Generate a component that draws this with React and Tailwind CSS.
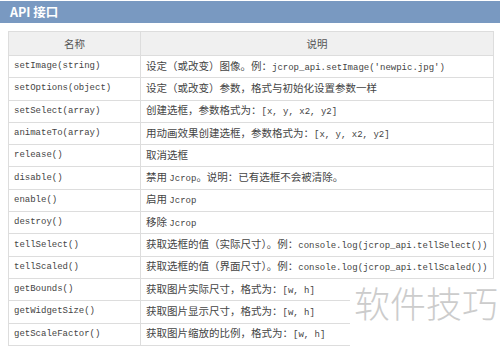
import React from 'react';

const rows = [
  ['setImage(string)', [['设定（或改变）图像。例：'], ["jcrop_api.setImage('newpic.jpg')", 1]]],
  ['setOptions(object)', [['设定（或改变）参数，格式与初始化设置参数一样']]],
  ['setSelect(array)', [['创建选框，参数格式为：'], ['[x, y, x2, y2]', 1]]],
  ['animateTo(array)', [['用动画效果创建选框，参数格式为：'], ['[x, y, x2, y2]', 1]]],
  ['release()', [['取消选框']]],
  ['disable()', [['禁用 '], ['Jcrop', 1], ['。说明：已有选框不会被清除。']]],
  ['enable()', [['启用 '], ['Jcrop', 1]]],
  ['destroy()', [['移除 '], ['Jcrop', 1]]],
  ['tellSelect()', [['获取选框的值（实际尺寸）。例：'], ['console.log(jcrop_api.tellSelect())', 1]]],
  ['tellScaled()', [['获取选框的值（界面尺寸）。例：'], ['console.log(jcrop_api.tellScaled())', 1]]],
  ['getBounds()', [['获取图片实际尺寸，格式为：'], ['[w, h]', 1]]],
  ['getWidgetSize()', [['获取图片显示尺寸，格式为：'], ['[w, h]', 1]]],
  ['getScaleFactor()', [['获取图片缩放的比例，格式为：'], ['[w, h]', 1]]],
];

const mono = "font-['Liberation_Mono',monospace] text-[9px]";
const cjk = "font-['Noto_Sans_CJK_SC',sans-serif] text-[10.5px]";

export default function App() {
  return (
    <div className="relative w-[500px] h-[350px] overflow-hidden bg-white">
      {/* title bar */}
      <div className="mt-px h-[22px] bg-[#7999c1] flex items-center pl-[10px]">
        <span className="text-white font-bold text-[12.5px] font-['Noto_Sans_CJK_SC',sans-serif]">API 接口</span>
      </div>

      <table className="ml-[8px] mt-[8px] w-[486px] border-collapse text-[#444] table-fixed">
        <thead>
          <tr className="h-[24px] bg-[#f0f0f0]">
            <th className={`w-[132px] border border-[#dddddd] font-normal text-[#555] ${cjk}`}>名称</th>
            <th className={`border border-[#dddddd] font-normal text-[#555] ${cjk}`}>说明</th>
          </tr>
        </thead>
        <tbody>
          {rows.map(([name, desc]) => (
            <tr key={name} className="h-[22.3px]">
              <td className={`border border-[#dddddd] pl-[5px] py-0 leading-none ${mono}`}>{name}</td>
              <td className="border border-[#dddddd] pl-[5px] py-0 whitespace-nowrap overflow-hidden">
                <div className="flex items-baseline h-[12px] leading-none">
                  {desc.map(([t, m], i) => (
                    <span key={i} className={`whitespace-pre ${m ? mono : cjk}`}>{t}</span>
                  ))}
                </div>
              </td>
            </tr>
          ))}
        </tbody>
      </table>

      {/* watermark */}
      <div className="absolute left-[350px] top-[279px] right-0 bottom-0 bg-white">
        <span className="absolute left-[4px] top-[5px] text-[36px] leading-none text-[#cccccc] font-['Noto_Sans_CJK_SC',sans-serif] font-light">软件技巧</span>
      </div>
    </div>
  );
}
